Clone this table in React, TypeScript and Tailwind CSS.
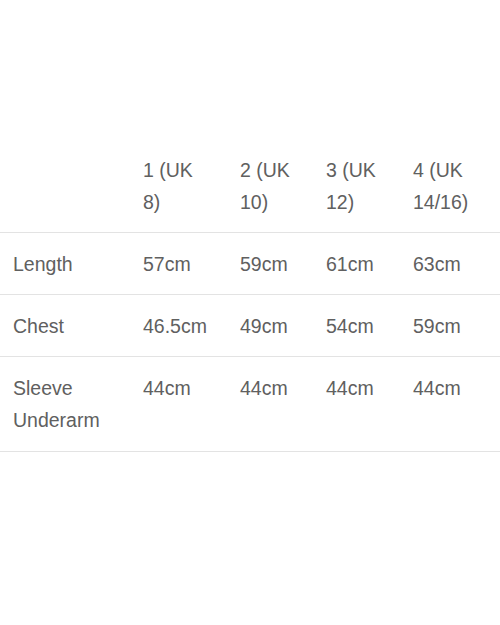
import React from "react";

const rows: { label: React.ReactNode; cells: React.ReactNode[] }[] = [
  { label: "", cells: [<>1 (UK<br />8)</>, <>2 (UK<br />10)</>, <>3 (UK<br />12)</>, <>4 (UK<br />14/16)</>] },
  { label: "Length", cells: ["57cm", "59cm", "61cm", "63cm"] },
  { label: "Chest", cells: ["46.5cm", "49cm", "54cm", "59cm"] },
  { label: <>Sleeve<br />Underarm</>, cells: ["44cm", "44cm", "44cm", "44cm"] },
];

export default function App() {
  return (
    <div
      className="w-[500px] h-[625px] bg-white pt-[139px] text-[19.5px] leading-[32px] text-[#606060]"
      style={{ fontFamily: '"Liberation Sans", Arial, sans-serif' }}
    >
      {rows.map((r, i) => {
        const pad = i === rows.length - 1 ? "px-[13px] pt-[15px] pb-[15px]" : "px-[13px] pt-[15px] pb-[14px]";
        return (
          <div
            key={i}
            className="grid grid-cols-[130px_97px_86px_87px_1fr] border-b border-[#e3e3e3]"
          >
            <div className={pad}>{r.label}</div>
            {r.cells.map((c, j) => (
              <div key={j} className={pad}>
                {c}
              </div>
            ))}
          </div>
        );
      })}
    </div>
  );
}
